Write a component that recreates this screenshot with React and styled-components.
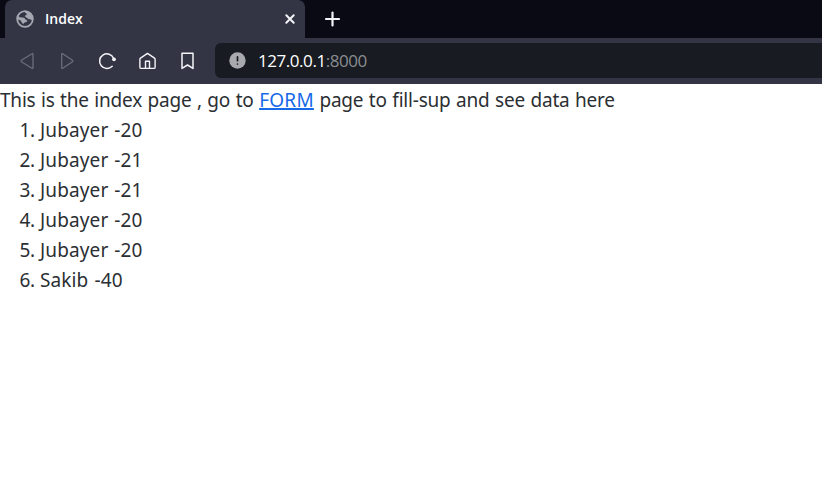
import React from "react";
import styled, { createGlobalStyle } from "styled-components";

const GlobalStyle = createGlobalStyle`
  * { box-sizing: border-box; }
  body { margin: 0; background: #fff; overflow: hidden; font-family: "Open Sans", "Noto Sans", sans-serif; }
`;

const Browser = styled.div`
  display: flex;
  flex-direction: column;
  height: 100vh;
`;

const TabStrip = styled.div`
  display: flex;
  height: 38px;
  padding-left: 5px;
  background: #0a0a15;
`;

const Tab = styled.div`
  display: flex;
  align-items: center;
  width: 300px;
  padding: 0 9px 0 11px;
  border-radius: 7px 7px 0 0;
  background: #333545;
`;

const TabTitle = styled.span`
  flex: 1;
  margin-left: 11px;
  color: #fff;
  font-size: 14px;
  font-weight: 600;
  line-height: 20px;
`;

const Icon = styled.svg`
  display: block;
  flex: none;
  fill: none;
  stroke: ${(p) => p.$color || "#f4f4f8"};
  stroke-width: ${(p) => p.$weight || 1.5};
  stroke-linejoin: round;
  stroke-linecap: round;
`;

const IconButton = styled.button`
  display: grid;
  place-items: center;
  width: 40px;
  height: 100%;
  padding: 0;
  border: 0;
  background: none;
`;

const NewTabButton = styled(IconButton)`
  margin-left: 7px;
`;

const Toolbar = styled.div`
  display: flex;
  align-items: center;
  height: 46px;
  padding: 0 0 1px 7px;
  background: #333545;
`;

const AddressBar = styled.div`
  display: flex;
  align-items: center;
  flex: 1;
  height: 35px;
  margin-left: 8px;
  padding-left: 14px;
  border-radius: 6px 0 0 6px;
  background: #181b21;
`;

const Address = styled.span`
  margin-left: 12px;
  color: #fff;
  font-size: 17px;
  line-height: 24px;
  letter-spacing: -0.45px;
`;

const Port = styled.span`
  color: #8b8d91;
`;

const Page = styled.main`
  flex: 1;
  padding-top: 1px;
  background: #fff;
  color: #2b2f33;
  font-family: "Noto Sans", "Open Sans", sans-serif;
  font-size: 19px;
  line-height: 30px;
`;

const Intro = styled.p`
  margin: 0;
  white-space: nowrap;
  letter-spacing: -0.21px;
  word-spacing: 0.8px;
`;

const Link = styled.a`
  color: #1669e8;
  letter-spacing: 0.25px;
  text-decoration: underline;
  text-decoration-thickness: 2px;
  text-underline-offset: 1px;
`;

const People = styled.ol`
  margin: 0;
  padding: 0;
  list-style: none;
`;

const Person = styled.li`
  display: flex;
  gap: 5px;
  letter-spacing: 0.12px;
  word-spacing: 0.9px;
`;

const Number = styled.span`
  width: 35px;
  letter-spacing: -0.2px;
  text-align: right;
`;

const people = [
  ["Jubayer", 20],
  ["Jubayer", 21],
  ["Jubayer", 21],
  ["Jubayer", 20],
  ["Jubayer", 20],
  ["Sakib", 40],
];

export default function App() {
  return (
    <>
      <GlobalStyle />
      <Browser>
        <TabStrip>
          <Tab>
            <Icon width="18" height="18" viewBox="0 0 18 18" $color="#a6a8b1" $weight="1.8">
              <circle cx="9" cy="9" r="7.8" />
              <path d="M2 6.5C4 8 6 7.7 7.8 8c1.8.4.6 1.8 2.3 2 1.8.3.8 2.2-.8 2.1-1.5-.1-1 2-2.5 1.3C5.3 12.6 6 11 4.5 10.2L1.8 9V6.5Z" fill="#a6a8b1" strokeWidth=".5" />
              <path d="M9.4 1.5 13 2.2l3.3 4v3.5c-1.8-.2-2.2-.8-3.3-.8-1.5 0-1.4-1.4-2.7-1.7-1.6-.3-1.3-2.1.3-2.3.9-.1.8-1 .1-1.3-1-.4-1.6-1.1-1.3-2.1Z" fill="#a6a8b1" strokeWidth=".5" />
            </Icon>
            <TabTitle>Index</TabTitle>
            <Icon width="12" height="12" viewBox="0 0 12 12" $weight="2">
              <path d="m2.3 2.3 7.4 7.4M9.7 2.3 2.3 9.7" />
            </Icon>
          </Tab>
          <NewTabButton aria-label="New tab">
            <Icon width="16" height="16" viewBox="-.5 0 16 16" $weight="2.2">
              <path d="M8 1.5v13M1.5 8h13" />
            </Icon>
          </NewTabButton>
        </TabStrip>
        <Toolbar>
          <IconButton aria-label="Back">
            <Icon width="18" height="20" viewBox="0 0 18 20" $color="#6c6e7a" $weight="1.3">
              <path d="M15 3.2v13.6q0 1.2-1 .4L3.4 10.8q-.8-.8 0-1.6L14 2.8q1-.8 1 .4Z" />
            </Icon>
          </IconButton>
          <IconButton aria-label="Forward">
            <Icon width="18" height="20" viewBox="0 0 18 20" $color="#6c6e7a" $weight="1.3">
              <path d="M3.7 3.2v13.6q0 1.2 1 .4l9.8-6.4q.8-.8 0-1.6L4.7 2.8q-1-.8-1 .4Z" />
            </Icon>
          </IconButton>
          <IconButton aria-label="Reload">
            <Icon width="20" height="20" viewBox="0 0 20 20">
              <path d="M15.2 15.2A7.3 7.3 0 1 1 16.6 7.2" />
              <circle cx="17" cy="8.3" r="1.9" fill="#f4f4f8" stroke="none" />
            </Icon>
          </IconButton>
          <IconButton aria-label="Home">
            <Icon width="20" height="20" viewBox="-.5 0 20 20" $weight="1.4">
              <path d="M3 7.2 10 2.4l7 4.8q.6.4.6 1v8q0 1.2-1.2 1.2H3.6q-1.2 0-1.2-1.2v-8q0-.6.6-1ZM8 17.2v-7h4v7" />
            </Icon>
          </IconButton>
          <IconButton aria-label="Bookmark">
            <Icon width="18" height="20" viewBox="-.5 0 18 20" $weight="1.5">
              <path d="M3.5 2.2h11v15.2L9 14l-5.5 3.4Z" />
            </Icon>
          </IconButton>
          <AddressBar>
            <Icon width="17" height="17" viewBox="0 0 17 17" $color="#181b21" $weight="1.7">
              <circle cx="8.5" cy="8.5" r="8.2" fill="#a7a9ae" stroke="none" />
              <path d="M8.5 4.9v3.8M8.5 12v.01" />
            </Icon>
            <Address>127.0.0.1<Port>:8000</Port></Address>
          </AddressBar>
        </Toolbar>
        <Page>
          <Intro>
            This is the index page , go to <Link href="#form">FORM</Link> page to fill-sup and see data here
          </Intro>
          <People>
            {people.map(([name, age], i) => (
              <Person key={i}>
                <Number>{i + 1}.</Number>
                <span>{name} -{age}</span>
              </Person>
            ))}
          </People>
        </Page>
      </Browser>
    </>
  );
}
